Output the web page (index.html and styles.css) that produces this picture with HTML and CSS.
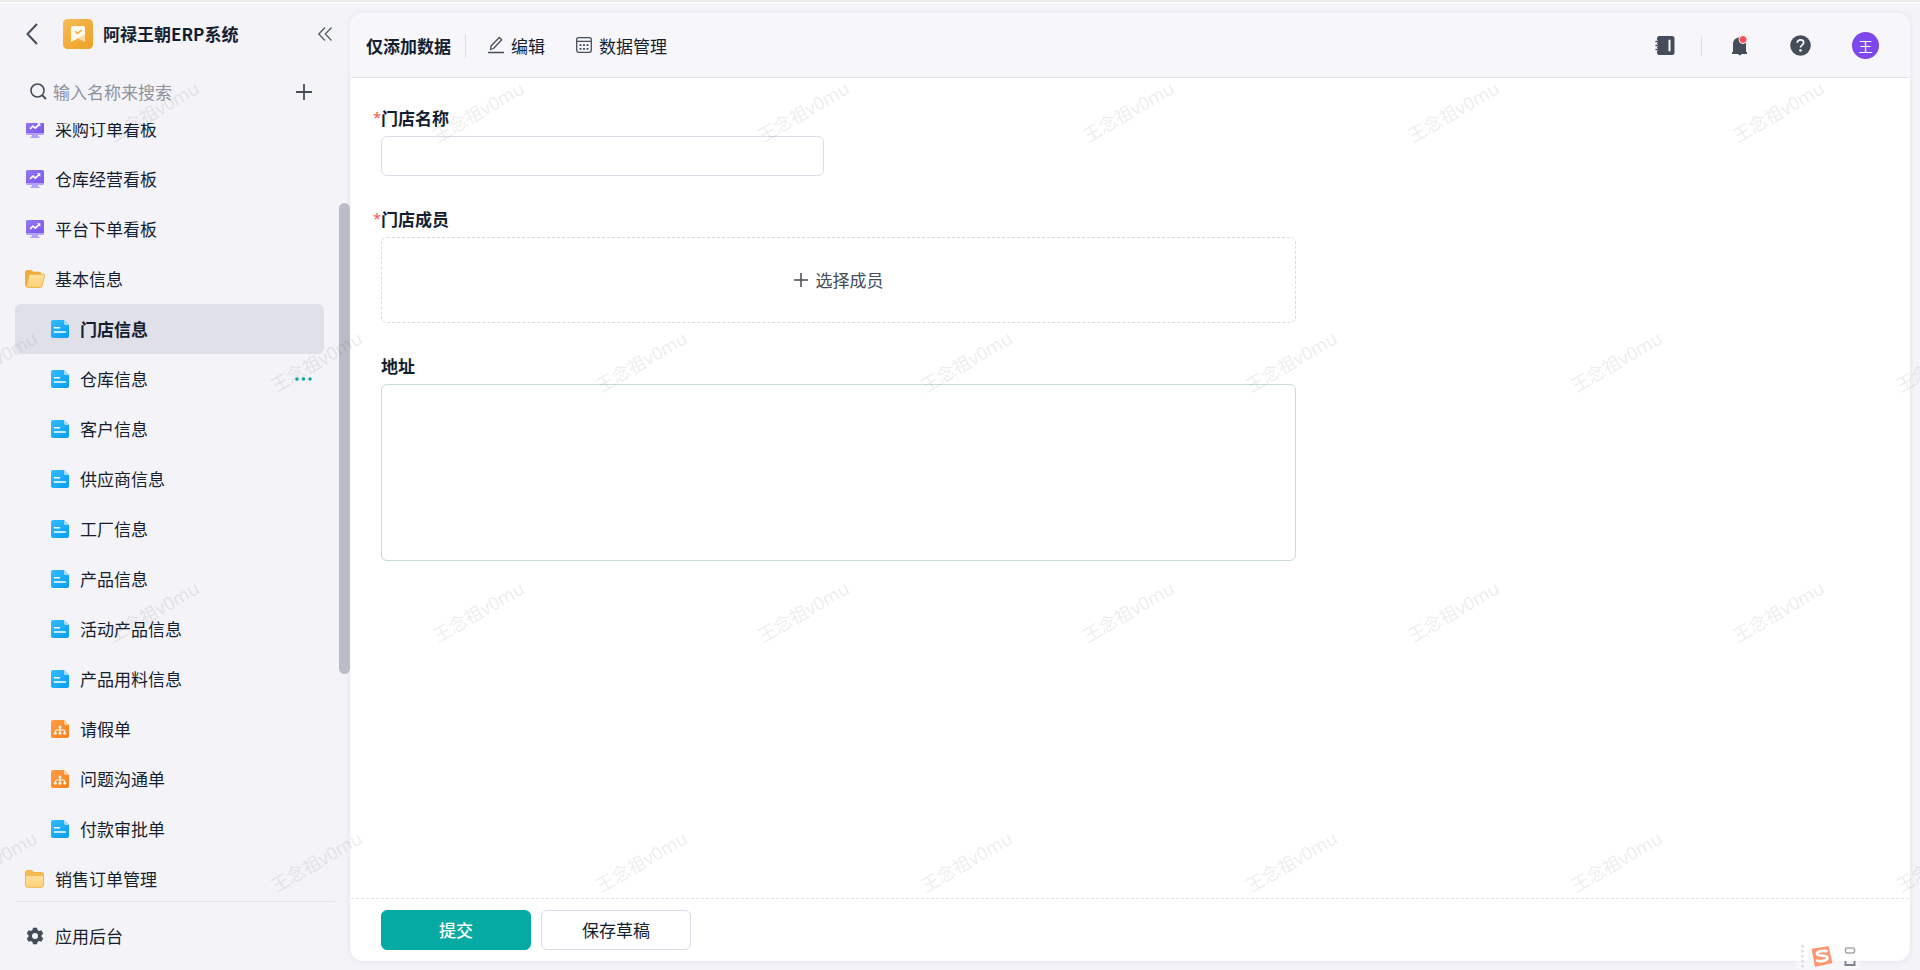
FILE: index.html
```html
<!DOCTYPE html>
<html lang="zh-CN">
<head>
<meta charset="utf-8">
<meta name="viewport" content="width=device-width, initial-scale=1">
<title>阿禄王朝ERP系统</title>
<link rel="stylesheet" href="styles.css">
</head>
<body>
<svg class="defs" aria-hidden="true">
  <defs>
    <linearGradient id="g-blue" x1="0" y1="0" x2="1" y2="1"><stop offset="0" stop-color="#35bcff"/><stop offset="1" stop-color="#069df2"/></linearGradient>
    <linearGradient id="g-orange" x1="0" y1="0" x2="1" y2="1"><stop offset="0" stop-color="#ff9f45"/><stop offset="1" stop-color="#fb7f17"/></linearGradient>
    <linearGradient id="g-purple" x1="0" y1="0" x2="1" y2="1"><stop offset="0" stop-color="#9478f7"/><stop offset="1" stop-color="#7a57ec"/></linearGradient>
    <linearGradient id="g-folder" x1="0" y1="0" x2="0" y2="1"><stop offset="0" stop-color="#ffe09a"/><stop offset="1" stop-color="#fdd27a"/></linearGradient>
    <linearGradient id="g-logo" x1="0" y1="0" x2="1" y2="1"><stop offset="0" stop-color="#f7bb55"/><stop offset="1" stop-color="#eda125"/></linearGradient>
    <symbol id="i-board" viewBox="0 0 18 18"><path d="M6 14h6v2.500h1.500V18h-9v-1.500H6z" fill="#b3a2fb"/><path d="M0 12h18v1.500a1.500 1.500 0 0 1-1.500 1.500h-15A1.500 1.500 0 0 1 0 13.500z" fill="#b3a2fb"/><path d="M1.500 0h15A1.500 1.500 0 0 1 18 1.500V13H0V1.500A1.500 1.500 0 0 1 1.500 0z" fill="url(#g-purple)"/><path d="M4 8.800l3-2.600 2.300 2L13 4.600" fill="none" stroke="#fff" stroke-width="1.700"/><path d="M10.800 3.300h3.500v3.500z" fill="#fff"/></symbol>
    <symbol id="i-form" viewBox="0 0 18 18"><path d="M2 0h11l5 5v11a2 2 0 0 1-2 2H2a2 2 0 0 1-2-2V2a2 2 0 0 1 2-2z" fill="url(#g-blue)"/><path d="M13 0l5 5h-3.500A1.500 1.500 0 0 1 13 3.500z" fill="#a5dcfa"/><path d="M3.500 7.700h5M3.500 11.900h11" stroke="#fff" stroke-width="1.500" stroke-linecap="round"/></symbol>
    <symbol id="i-flow" viewBox="0 0 18 18"><path d="M2 0h11l5 5v11a2 2 0 0 1-2 2H2a2 2 0 0 1-2-2V2a2 2 0 0 1 2-2z" fill="url(#g-orange)"/><path d="M13 0l5 5h-3.500A1.500 1.500 0 0 1 13 3.500z" fill="#ffcf9e"/><path d="M9 7v6M4.300 13v-1.500a1.500 1.500 0 0 1 1.500-1.500h6.400a1.500 1.500 0 0 1 1.500 1.500V13" fill="none" stroke="#fff" stroke-width="1.100"/><g fill="#fff"><circle cx="9" cy="7" r="1.500"/><circle cx="4.300" cy="13.300" r="1.400"/><circle cx="9" cy="13.300" r="1.400"/><circle cx="13.700" cy="13.300" r="1.400"/></g></symbol>
    <symbol id="i-open" viewBox="0 0 20 18"><path d="M2.500 0H6l2.500 1.800H14a2.300 2.300 0 0 1 2.300 2.300V15l-13 2.500A3 3 0 0 1 0 15V2.500A2.500 2.500 0 0 1 2.500 0z" fill="#efad3d"/><path d="M5.600 4.200h12.500a1.400 1.400 0 0 1 1.400 1.700l-2.400 9.900a2.200 2.200 0 0 1-2.100 1.600H3a1.500 1.500 0 0 1-1.400-1.900L4 5.500a1.600 1.600 0 0 1 1.600-1.300z" fill="url(#g-folder)" stroke="#f0ab38" stroke-width=".900"/></symbol>
    <symbol id="i-folder" viewBox="0 0 20 18"><path d="M2.500 .500h4l2.500 2h7.500a2 2 0 0 1 2 2V15H.500V2.500a2 2 0 0 1 2-2z" fill="#f5bb55" stroke="#eda935" stroke-width=".900"/><path d="M.500 5.500h18V15a2.400 2.400 0 0 1-2.400 2.400H2.900A2.400 2.400 0 0 1 .500 15z" fill="url(#g-folder)" stroke="#f3b54c" stroke-width=".900"/></symbol>
    <pattern id="marks" width="325" height="500" patternUnits="userSpaceOnUse">
      <g class="mark"><text transform="translate(113 143) rotate(-30)">王念祖v0mu</text><text transform="translate(276 393) rotate(-30)">王念祖v0mu</text><text transform="translate(-49 393) rotate(-30)">王念祖v0mu</text></g>
    </pattern>
  </defs>
</svg>

<div class="app">
  <aside class="sidebar">
    <header class="brand">
      <button class="icon-btn back" type="button" aria-label="返回"><svg width="12" height="22" viewBox="0 0 12 22"><path d="M11 1L1.500 11 11 21" fill="none" stroke="#454d5b" stroke-width="2"/></svg></button>
      <svg class="logo" width="30" height="30" viewBox="0 0 30 30"><rect width="30" height="30" rx="4.500" fill="url(#g-logo)"/><path d="M15 19.500l7-4V23z" fill="#fbdca6"/><path d="M9.500 7h11A1.500 1.500 0 0 1 22 8.500v7.300L8 23V8.500A1.500 1.500 0 0 1 9.500 7z" fill="#fff8ec"/><path d="M12 12.300l2.600 2.300 4-3.600" fill="none" stroke="#f0aa38" stroke-width="1.500"/></svg>
      <h1>阿禄王朝ERP系统</h1>
      <button class="icon-btn" type="button" aria-label="收起"><svg width="16" height="16" viewBox="0 0 16 16"><path d="M8 1.500L1.800 8 8 14.500M14.500 1.500L8.300 8l6.200 6.500" fill="none" stroke="#5a6270" stroke-width="1.400"/></svg></button>
    </header>
    <div class="search">
      <svg width="17" height="17" viewBox="0 0 17 17"><circle cx="7.500" cy="7.500" r="6.500" fill="none" stroke="#454d5b" stroke-width="1.600"/><path d="M12 12l4 4" stroke="#454d5b" stroke-width="1.800"/></svg>
      <input type="text" aria-label="搜索" placeholder="输入名称来搜索">
      <button class="icon-btn" type="button" aria-label="新建"><svg width="16" height="16" viewBox="0 0 16 16"><path d="M8 0v16M0 8h16" stroke="#454d5b" stroke-width="1.800"/></svg></button>
    </div>
    <nav class="nav">
      <ul>
        <li><a href="#"><svg class="ico"><use href="#i-board"/></svg>采购订单看板</a></li>
        <li><a href="#"><svg class="ico"><use href="#i-board"/></svg>仓库经营看板</a></li>
        <li><a href="#"><svg class="ico"><use href="#i-board"/></svg>平台下单看板</a></li>
        <li><a href="#"><svg class="ico wide"><use href="#i-open"/></svg>基本信息</a>
          <ul class="sub">
            <li><a class="current" href="#"><svg class="ico"><use href="#i-form"/></svg>门店信息</a></li>
            <li><a href="#"><svg class="ico"><use href="#i-form"/></svg>仓库信息<svg class="more" width="18" height="4" viewBox="0 0 18 4"><g fill="#05aba2"><circle cx="2" cy="2" r="1.700"/><circle cx="8.500" cy="2" r="1.700"/><circle cx="15" cy="2" r="1.700"/></g></svg></a></li>
            <li><a href="#"><svg class="ico"><use href="#i-form"/></svg>客户信息</a></li>
            <li><a href="#"><svg class="ico"><use href="#i-form"/></svg>供应商信息</a></li>
            <li><a href="#"><svg class="ico"><use href="#i-form"/></svg>工厂信息</a></li>
            <li><a href="#"><svg class="ico"><use href="#i-form"/></svg>产品信息</a></li>
            <li><a href="#"><svg class="ico"><use href="#i-form"/></svg>活动产品信息</a></li>
            <li><a href="#"><svg class="ico"><use href="#i-form"/></svg>产品用料信息</a></li>
            <li><a href="#"><svg class="ico"><use href="#i-flow"/></svg>请假单</a></li>
            <li><a href="#"><svg class="ico"><use href="#i-flow"/></svg>问题沟通单</a></li>
            <li><a href="#"><svg class="ico"><use href="#i-form"/></svg>付款审批单</a></li>
          </ul>
        </li>
        <li><a href="#"><svg class="ico wide"><use href="#i-folder"/></svg>销售订单管理</a></li>
      </ul>
    </nav>
    <div class="admin"><a href="#"><svg class="ico" viewBox="0 0 18 18"><path fill="#454d5b" fill-rule="evenodd" d="M7 .800h4l.500 2.200 1.600.900 2.200-.700 2 3.400-1.700 1.500v1.800l1.700 1.500-2 3.400-2.200-.700-1.600.900-.500 2.200H7L6.500 15l-1.600-.900-2.200.700-2-3.400 1.700-1.500V8.100L.700 6.600l2-3.400 2.200.700L6.500 3zM9 6a3 3 0 1 0 0 6 3 3 0 0 0 0-6z"/></svg>应用后台</a></div>
    <div class="thumb"></div>
  </aside>

  <main class="card">
    <header class="topbar">
      <h2>仅添加数据</h2>
      <button class="tool" type="button"><svg width="16" height="20" viewBox="0 0 16 20"><path d="M2.500 13.500l.500-3.500L11.300 1.500l2.400 2.300L5.500 12.500z" fill="none" stroke="#454d5b" stroke-width="1.300" stroke-linejoin="round"/><path d="M0 16.500h16" stroke="#454d5b" stroke-width="1.300"/></svg>编辑</button>
      <button class="tool" type="button"><svg width="16" height="20" viewBox="0 0 16 20"><rect x=".700" y="1.700" width="14.600" height="14.600" rx="2" fill="none" stroke="#454d5b" stroke-width="1.300"/><path d="M1 5.300h14" stroke="#454d5b" stroke-width="1.300"/><path d="M3.500 9.200h9M3.500 12.800h9" stroke="#454d5b" stroke-width="1.800" stroke-dasharray="2 1.500"/></svg>数据管理</button>
      <div class="actions">
        <button class="icon-btn book" type="button" aria-label="文档"><svg width="20" height="20" viewBox="0 0 20 20"><path d="M4.500 0H17a2.500 2.500 0 0 1 2.500 2.500v14A2.500 2.500 0 0 1 17 19H4.500A2.500 2.500 0 0 1 2 16.500v-14A2.500 2.500 0 0 1 4.500 0z" fill="#454d5b"/><path d="M1.500 5.500h1.500M1.500 9.500h1.500M1.500 13.500h1.500" stroke="#f6f6fb" stroke-width="2.600"/><path d="M1 5.500h3.500M1 9.500h3.500M1 13.500h3.500" stroke="#454d5b" stroke-width="1.600" stroke-linecap="round"/><path d="M14.500 4.500v10" stroke="#fff" stroke-width="2" stroke-linecap="round"/></svg></button>
        <button class="icon-btn" type="button" aria-label="通知"><svg width="18" height="22" viewBox="0 0 18 22"><path d="M8 2.500a1 1 0 0 1 2 0c3 .600 5 3 5 6V17h1v2H10.500a1.700 1.700 0 0 1-3.300 0H1v-2h1V8.500c0-3 2.500-5.400 6-6z" fill="#454d5b"/><circle cx="12" cy="4.500" r="4" fill="#f95051" stroke="#f6f6fb" stroke-width="1"/></svg></button>
        <button class="icon-btn" type="button" aria-label="帮助"><svg width="21" height="22" viewBox="0 0 21 22"><circle cx="10.500" cy="10.500" r="10.300" fill="#454d5b"/><path d="M7.300 7.800c0-2 1.400-3 3.200-3s3.200 1.100 3.200 2.800c0 2.200-3.200 2.300-3.200 5" fill="none" stroke="#fff" stroke-width="1.700"/><circle cx="10.500" cy="15.500" r="1.300" fill="#fff"/></svg></button>
        <button class="avatar" type="button">王</button>
      </div>
    </header>
    <form class="form">
      <div class="body">
        <div class="field">
          <label class="required" for="name">门店名称</label>
          <input class="text" id="name" type="text">
        </div>
        <div class="field">
          <label class="required" for="members">门店成员</label>
          <button class="picker" id="members" type="button"><svg width="14" height="14" viewBox="0 0 14 14"><path d="M7 0v14M0 7h14" stroke="#454d5b" stroke-width="1.500"/></svg>选择成员</button>
        </div>
        <div class="field">
          <label for="address">地址</label>
          <textarea id="address"></textarea>
        </div>
      </div>
      <footer class="submit">
        <button class="btn primary" type="button">提交</button>
        <button class="btn" type="button">保存草稿</button>
      </footer>
    </form>
  </main>
</div>

<svg class="watermark" aria-hidden="true"><rect width="100%" height="100%" fill="url(#marks)"/></svg>

<div class="ime" aria-hidden="true">
  <svg width="64" height="27" viewBox="0 0 64 27"><path d="M0 18h64v8H0z" fill="#fff" opacity=".4"/><path d="M6.500 2v24" stroke="#dcdcde" stroke-width="2.500" stroke-dasharray="2.500 2.500"/><path d="M16.500 6.500L32 4l3.500 15.500L19.500 23z" fill="#ff9570" stroke="#ff9570" stroke-width="1.500" stroke-linejoin="round"/><path d="M31.500 8.500c-3-1.200-10.500-.500-10.500 2.300s10.500 1 10.500 4-7.500 4-11.500 2.700" fill="none" stroke="#fff" stroke-width="2.800"/><rect x="49.500" y="5" width="9" height="5" rx="1.500" fill="none" stroke="#a5aab0" stroke-width="1.600"/><path d="M49.500 18v4h9v-4" fill="none" stroke="#7e858f" stroke-width="2"/></svg>
</div>
</body>
</html>
```

FILE: styles.css
```css
* {
  box-sizing: border-box;
}

body {
  margin: 0;
  background: #f3f3f8;
  color: #141e31;
  font: 17px/24px "Noto Sans CJK SC", "Noto Sans", sans-serif;
}

button,
input,
textarea {
  font: inherit;
  color: inherit;
}

a {
  color: inherit;
  text-decoration: none;
}

h1,
h2,
ul {
  margin: 0;
  padding: 0;
  font-size: inherit;
}

ul {
  list-style: none;
}

svg {
  display: block;
  flex: none;
}

.defs {
  position: absolute;
  width: 0;
  height: 0;
}

.app {
  display: flex;
  height: 100vh;
  border-top: 2px solid #ebebeb;
  box-shadow: inset 0 1px #fff;
}

.icon-btn {
  display: flex;
  padding: 0;
  border: 0;
  background: none;
}

/* Sidebar */
.sidebar {
  position: relative;
  display: flex;
  flex-direction: column;
  flex: none;
  width: 350px;
}

.brand {
  display: flex;
  align-items: center;
  height: 63px;
  padding: 0 17px 0 26px;
}

.back {
  margin-right: 25px;
}

.brand h1 {
  flex: 1;
  margin-left: 10px;
}

.search {
  display: flex;
  align-items: center;
  gap: 6px;
  height: 58px;
  padding: 0 38px 5px 30px;
}

.search input {
  flex: 1;
  min-width: 0;
  padding: 0;
  border: 0;
  outline: 0;
  background: none;
}

.search input::placeholder {
  color: #8f929d;
  opacity: 1;
}

.nav {
  flex: 1;
  min-height: 0;
  overflow: hidden;
}

.nav > ul {
  margin: -19px 26px 0 15px;
}

.nav a {
  display: flex;
  align-items: center;
  height: 50px;
  padding: 0 11px;
  border-radius: 6px;
}

.nav .sub a {
  padding-left: 36px;
}

.nav .current {
  background: #e0e0e8;
  font-weight: bold;
}

.ico {
  width: 18px;
  height: 18px;
  margin-right: 11px;
}

.ico.wide {
  width: 20px;
  margin: 0 10px 0 -1px;
}

.more {
  margin-left: auto;
}

.admin {
  margin: 0 15px;
  border-top: 1px solid #e5e5ea;
}

.admin a {
  display: flex;
  align-items: center;
  height: 68px;
  padding-left: 11px;
}

.thumb {
  position: absolute;
  top: 201px;
  right: 0;
  width: 11px;
  height: 471px;
  border-radius: 6px;
  background: #babdc7;
}

/* Main panel */
.card {
  display: flex;
  flex: 1;
  flex-direction: column;
  min-width: 0;
  margin: 11px 10px 9px 0;
  overflow: hidden;
  border: 1px solid #fbfbfd;
  border-radius: 12px;
  background: #fff;
  box-shadow: 0 0 6px rgba(20, 30, 80, 0.07);
}

.topbar {
  display: flex;
  align-items: center;
  height: 64px;
  padding: 0 30px 0 15px;
  border-bottom: 1px solid #e3e4e9;
  background: #f6f6fb;
}

.topbar h2 {
  margin-right: 22px;
  padding-right: 14px;
  border-right: 1px solid #dcdde3;
}

.tool {
  display: flex;
  align-items: center;
  gap: 7px;
  margin-right: 31px;
  padding: 0;
  border: 0;
  background: none;
}

.actions {
  display: flex;
  align-items: center;
  gap: 41px;
  margin-left: auto;
}

.book {
  margin-right: -12px;
  padding-right: 26px;
  border-right: 1px solid #e0e1e7;
}

.avatar {
  width: 27px;
  height: 27px;
  padding: 0;
  border: 0;
  border-radius: 50%;
  background: #7e48ea;
  color: #fff;
  font-size: 14px;
}

.form {
  display: flex;
  flex: 1;
  flex-direction: column;
  min-height: 0;
}

.body {
  display: flex;
  flex: 1;
  flex-direction: column;
  gap: 31px;
  max-width: 975px;
  padding: 28px 30px;
}

.field {
  display: flex;
  flex-direction: column;
  align-items: flex-start;
  gap: 6px;
}

.field label {
  position: relative;
  font-weight: bold;
}

.required::before {
  content: "*";
  position: absolute;
  right: 100%;
  color: #f95051;
  font-family: "Noto Sans", sans-serif;
  font-weight: normal;
  font-size: 14px;
}

.text {
  width: 443px;
  max-width: 100%;
  height: 40px;
  padding: 0 12px;
  border: 1px solid #dcdde6;
  border-radius: 6px;
  background: #fff;
}

.picker {
  display: flex;
  align-items: center;
  justify-content: center;
  gap: 8px;
  width: 100%;
  height: 86px;
  border: 1px dashed #d9dae2;
  border-radius: 6px;
  background: #fff;
  color: #454d5b;
}

textarea {
  width: 100%;
  height: 177px;
  padding: 8px 12px;
  border: 1px solid #ccdadd;
  border-radius: 6px;
  background: #fff;
  resize: none;
}

.submit {
  display: flex;
  gap: 10px;
  padding: 11px 30px 10px;
  border-top: 1px dashed #e3e3e6;
}

.btn {
  width: 150px;
  height: 40px;
  border: 1px solid #d9dce6;
  border-radius: 6px;
  background: #fff;
}

.primary {
  border-color: #05aba2;
  background: #05aba2;
  color: #fff;
  font-weight: 500;
}

/* Overlays */
.watermark {
  position: fixed;
  inset: 0;
  width: 100%;
  height: 100%;
  pointer-events: none;
}

.mark {
  fill: #000;
  fill-opacity: 0.07;
  font-family: "Noto Sans", "Noto Sans CJK SC", sans-serif;
  font-size: 18px;
}

.ime {
  position: fixed;
  right: 60px;
  bottom: 0;
}
```
